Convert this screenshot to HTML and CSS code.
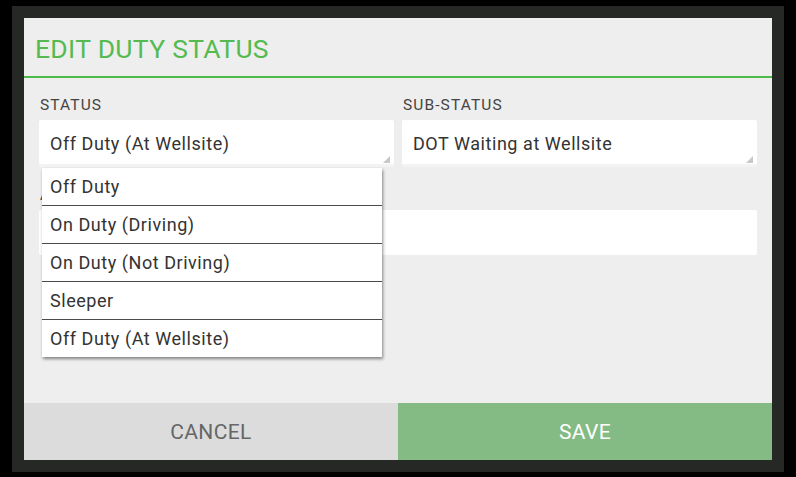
FILE: index.html
```html
<!DOCTYPE html>
<html lang="en">
<head>
    <meta charset="UTF-8">
    <meta name="viewport" content="width=device-width, initial-scale=1.0">
    <title>Edit Duty Status</title>
    <link rel="stylesheet" href="styles.css">
</head>
<body>

    <div class="frame">
        <div class="dialog">
            <div class="dialog-header">
                <h2>EDIT DUTY STATUS</h2>
            </div>

            <div class="dialog-body">
                <div class="row">
                    <div class="field">
                        <label>STATUS</label>
                        <div class="select">Off Duty (At Wellsite)</div>

                        <!-- Lista aberta do seletor de status -->
                        <ul class="dropdown">
                            <li>Off Duty</li>
                            <li>On Duty (Driving)</li>
                            <li>On Duty (Not Driving)</li>
                            <li>Sleeper</li>
                            <li>Off Duty (At Wellsite)</li>
                        </ul>
                    </div>
                    <div class="field">
                        <label>SUB-STATUS</label>
                        <div class="select">DOT Waiting at Wellsite</div>
                    </div>
                </div>

                <div class="row row-annotation">
                    <div class="field field-wide">
                        <label>ANNOTATION</label>
                        <div class="text-input"></div>
                    </div>
                </div>
            </div>

            <div class="dialog-buttons">
                <button class="btn-cancel">CANCEL</button>
                <button class="btn-save">SAVE</button>
            </div>
        </div>
    </div>

</body>
</html>
```

FILE: styles.css
```css
body {
    margin: 0;
    background: #000;
    font-family: Roboto, 'Noto Sans', sans-serif;
    color: #333;
}
.frame {
    background: #262826;
    margin: 6px 0 0 12px;
    padding: 12px;
    width: 748px;
    height: 442px;
}
.dialog {
    background: #eeeeee;
    height: 442px;
    display: flex;
    flex-direction: column;
}
.dialog-header {
    height: 58px;
    border-bottom: 2px solid #4cbb4a;
    display: flex;
    align-items: center;
    padding-left: 11px;
}
.dialog-header h2 {
    margin: 0;
    font-weight: normal;
    font-size: 26.5px;
    letter-spacing: 0.3px;
    color: #55bb50;
    padding-top: 3px;
}
.dialog-body {
    flex: 1;
    padding: 16px 15px 0 15px;
}
.row {
    display: flex;
    gap: 8px;
}
.row-annotation {
    margin-top: 17px;
}
.field {
    flex: 1;
    position: relative;
}
label {
    display: block;
    font-size: 15.5px;
    letter-spacing: 1.1px;
    line-height: 20px;
    color: #444;
    margin-bottom: 6px;
    padding-top: 1px;
    height: 19px;
    padding-left: 1px;
}
.select {
    position: relative;
    background: #fff;
    height: 47px;
    box-sizing: border-box;
    border-radius: 2px;
    border-bottom: 3px solid #f3f3f3;
    padding: 13px 11px 0;
    font-size: 18px;
    letter-spacing: 0.55px;
    color: #333;
}
.select::after {
    content: "";
    position: absolute;
    right: 4px;
    bottom: 1px;
    border-style: solid;
    border-width: 0 0 7px 7px;
    border-color: transparent transparent #c8c8c8 transparent;
}
.text-input {
    background: #fff;
    height: 45px;
    border-radius: 2px;
}
.dropdown {
    position: absolute;
    left: 3px;
    top: 74px;
    width: 340px;
    margin: 0;
    padding: 0;
    list-style: none;
    background: #fff;
    box-shadow: 1px 2px 3px rgba(0, 0, 0, 0.45);
    z-index: 2;
}
.dropdown li {
    height: 37px;
    line-height: 38px;
    padding-left: 8px;
    font-size: 18px;
    letter-spacing: 0.55px;
    color: #333;
    border-bottom: 1px solid #4a4a4a;
}
.dropdown li:last-child {
    border-bottom: none;
}
.dialog-buttons {
    display: flex;
    height: 57px;
}
.dialog-buttons button {
    flex: 1;
    border: none;
    margin: 0;
    padding-top: 2px;
    font-family: Roboto, sans-serif;
    font-size: 21px;
    letter-spacing: 0.4px;
    cursor: pointer;
}
.btn-cancel {
    background: #dcdcdc;
    color: #666;
    border-right: 1px solid #e8e8e8;
}
.btn-save {
    background: #84bb84;
    color: #fff;
}
```
